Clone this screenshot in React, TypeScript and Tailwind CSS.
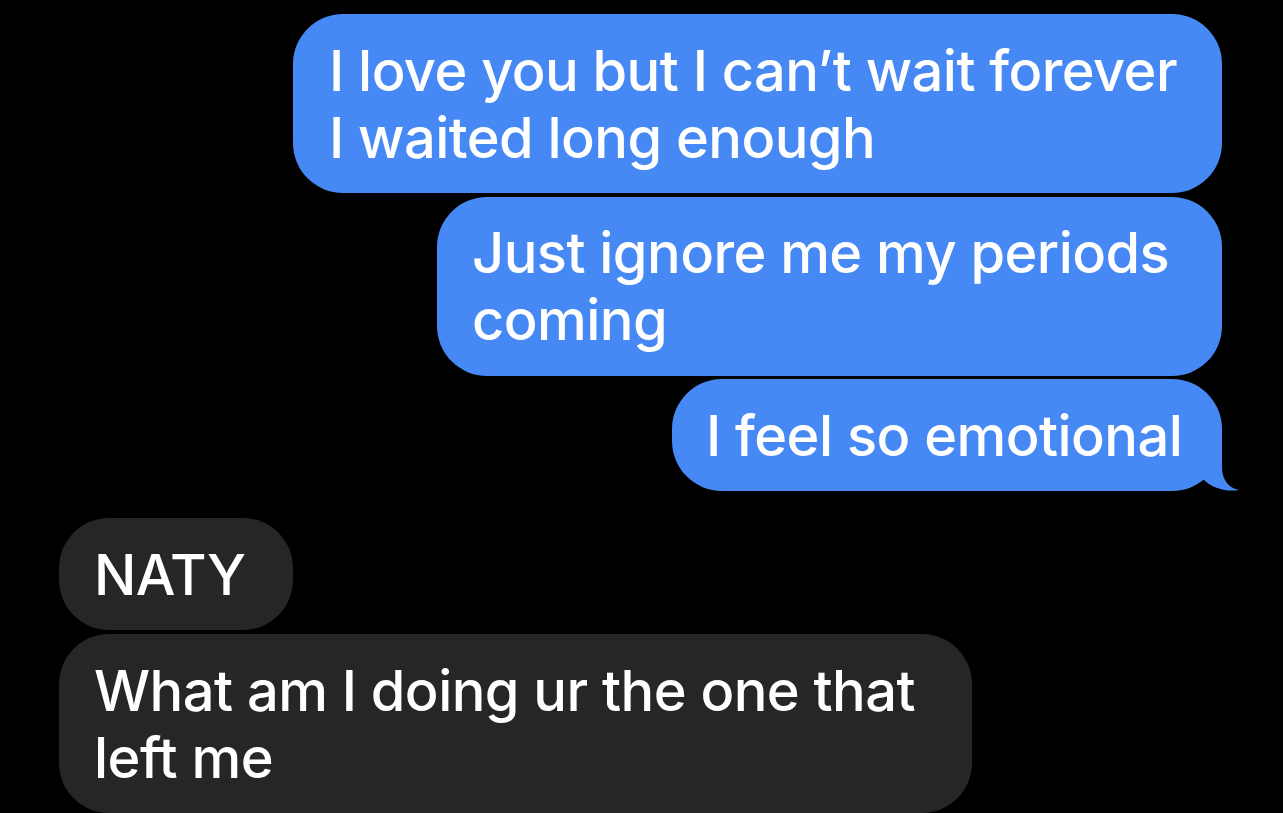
const SENT = 'bg-[#4689f4] text-white';
const RECV = 'bg-[#262629] text-white';

function Bubble({ lines, className }: { lines: string[]; className: string }) {
  return (
    <div className={`rounded-[50px] pt-[23.5px] pb-[21.5px] pr-[36px] text-[56px] font-medium leading-[67px] tracking-[-0.55px] whitespace-nowrap ${className}`}>
      {lines.map((l) => (
        <div key={l}>{l}</div>
      ))}
    </div>
  );
}

export default function App() {
  return (
    <div className="h-[813px] w-[1283px] overflow-hidden bg-black pt-[14px] font-['Inter','Liberation_Sans',sans-serif]">
      <div className="flex flex-col items-end gap-[3.5px] pr-[61px]">
        <Bubble
          lines={['I love you but I can’t wait forever', 'I waited long enough']}
          className={`${SENT} w-[929px] pl-[36px]`}
        />
        <Bubble lines={['Just ignore me my periods', 'coming']} className={`${SENT} w-[785px] pl-[35px]`} />
        <div className="relative">
          <Bubble lines={['I feel so emotional']} className={`${SENT} w-[550px] pl-[34px]`} />
          {/* tail */}
          <svg className="absolute -right-[18px] bottom-0" width="50" height="52" viewBox="0 0 50 52">
            <path d="M32 0 L32 28 C32 40 38 49 49 51 C38 53 22 50 13 40 L0 0 Z" fill="#4689f4" />
          </svg>
        </div>
      </div>
      <div className="mt-[27px] flex flex-col items-start gap-[4px] pl-[59px]">
        <Bubble lines={['NATY']} className={`${RECV} w-[234px] pl-[35px]`} />
        <Bubble lines={['What am I doing ur the one that', 'left me']} className={`${RECV} w-[913px] pl-[35px]`} />
      </div>
    </div>
  );
}
